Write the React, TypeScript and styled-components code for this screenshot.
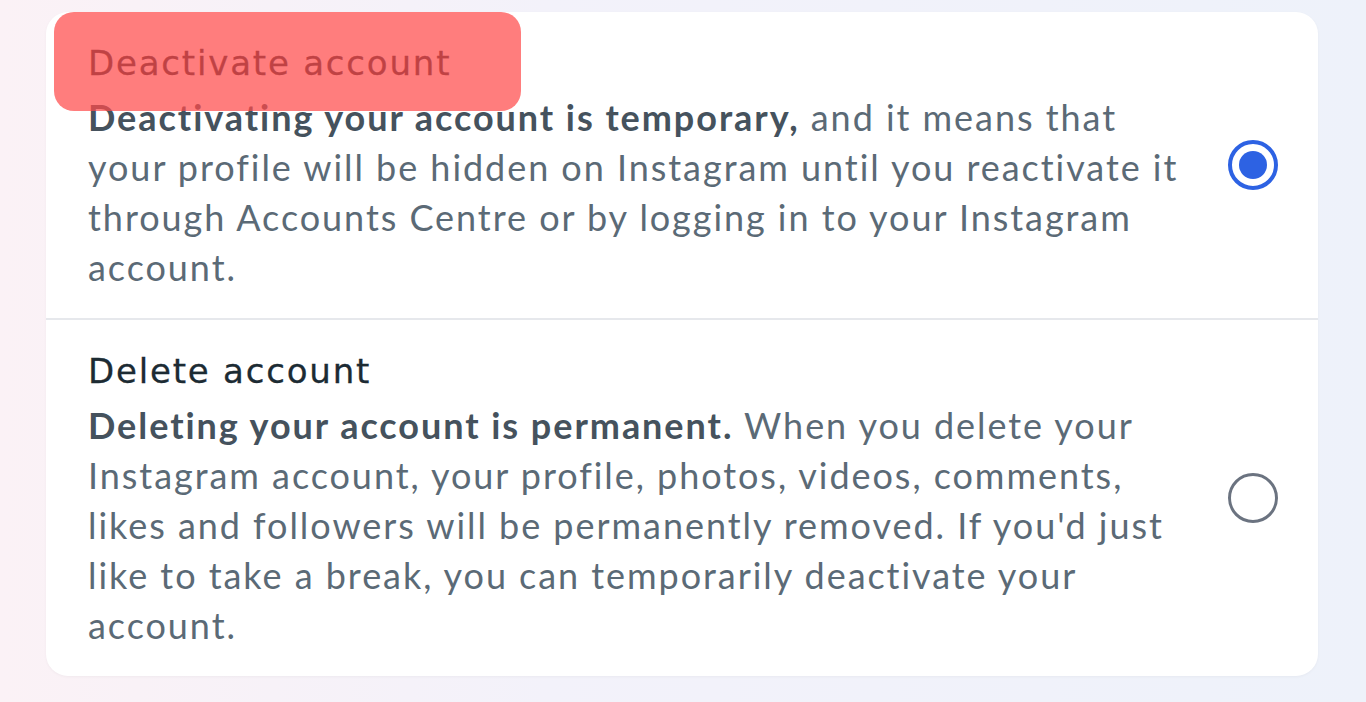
import React from "react"
import styled, { createGlobalStyle } from "styled-components"

const GlobalStyle = createGlobalStyle`
  html, body {
    margin: 0;
    padding: 0;
  }
  body {
    width: 1366px;
    height: 702px;
    overflow: hidden;
    font-family: Lato, "Noto Sans", sans-serif;
    background: linear-gradient(90deg, #fbf2f6 0%, #f3f2fa 40%, #eef2fa 100%);
  }
`

const Page = styled.div`
  height: 702px;
  box-sizing: border-box;
  padding: 12px 48px 0 46px;
`

const Card = styled.div`
  background: #fff;
  border-radius: 22px;
  box-shadow: 0 1px 3px rgba(0, 0, 0, 0.04);
  display: flex;
  flex-direction: column;
`

const Option = styled.label<{ $divider?: boolean }>`
  position: relative;
  display: grid;
  grid-template-columns: 1fr 50px;
  align-items: center;
  column-gap: 48px;
  padding: 26px 40px 26px 42px;
  border-top: ${(p) => (p.$divider ? "2px solid #e6e8ec" : "none")};
`

const Title = styled.div`
  font-family: "DejaVu Sans", "Open Sans", sans-serif;
  font-size: 34px;
  letter-spacing: 1.8px;
  -webkit-text-stroke: 0.3px currentColor;
  line-height: 50px;
  color: #1c2b33;
  margin-bottom: 4px;
`

const Body = styled.div`
  font-size: 36px;
  letter-spacing: 1.95px;
  line-height: 50px;
  color: #5b6a76;

  & b {
    font-weight: 700;
    color: #45525d;
  }
`

const Highlight = styled.div`
  position: absolute;
  left: 8px;
  top: 0;
  width: 467px;
  height: 99px;
  border-radius: 20px;
  background: rgba(255, 75, 75, 0.72);
  pointer-events: none;
`

const Radio = styled.span<{ $checked?: boolean }>`
  width: 50px;
  height: 50px;
  box-sizing: border-box;
  border-radius: 50%;
  border: ${(p) => (p.$checked ? "4px solid #2d62e3" : "3px solid #6b7380")};
  display: flex;
  align-items: center;
  justify-content: center;

  &::after {
    content: "";
    width: 28px;
    height: 28px;
    border-radius: 50%;
    background: ${(p) => (p.$checked ? "#2d62e3" : "transparent")};
  }
`

export default function App() {
  return (
    <>
      <GlobalStyle />
      <Page>
        <Card>
          <Option>
            <div>
              <Title>Deactivate account</Title>
              <Body>
                <b>Deactivating your account is temporary,</b> and it means that
                your profile will be hidden on Instagram until you reactivate it
                through Accounts Centre or by logging in to your Instagram
                account.
              </Body>
            </div>
            <Radio $checked />
            <Highlight />
          </Option>
          <Option $divider>
            <div>
              <Title>Delete account</Title>
              <Body>
                <b>Deleting your account is permanent.</b> When you delete your
                Instagram account, your profile, photos, videos, comments, likes
                and followers will be permanently removed. If you'd just like to
                take a break, you can temporarily deactivate your account.
              </Body>
            </div>
            <Radio />
          </Option>
        </Card>
      </Page>
    </>
  )
}
